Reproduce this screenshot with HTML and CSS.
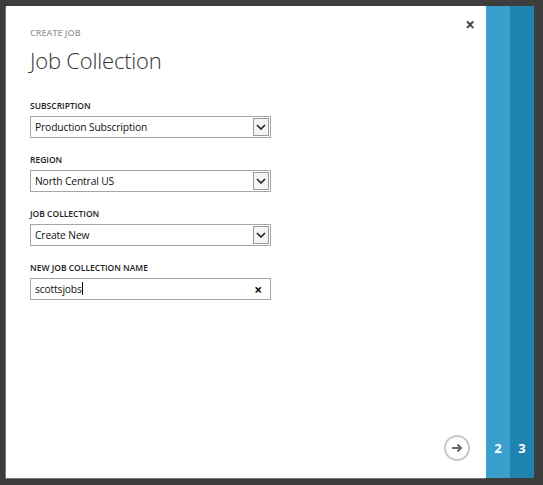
FILE: index.html
```
<html>

<head>
    <link rel="stylesheet" href="styles.css">
</head>

<body>
    <div class="modal">
        <div class="dialog">
            <div class="close">&#215;</div>
            <div class="kicker">CREATE JOB</div>
            <h1>Job Collection</h1>

            <div class="field">
                <label>SUBSCRIPTION</label>
                <div class="select">
                    <span>Production Subscription</span>
                    <span class="arrow"><svg width="10" height="6" viewBox="0 0 10 6"><path d="M1 1 L5 5 L9 1" fill="none" stroke="#222" stroke-width="1.6"/></svg></span>
                </div>
            </div>

            <div class="field">
                <label>REGION</label>
                <div class="select">
                    <span>North Central US</span>
                    <span class="arrow"><svg width="10" height="6" viewBox="0 0 10 6"><path d="M1 1 L5 5 L9 1" fill="none" stroke="#222" stroke-width="1.6"/></svg></span>
                </div>
            </div>

            <div class="field">
                <label>JOB COLLECTION</label>
                <div class="select">
                    <span>Create New</span>
                    <span class="arrow"><svg width="10" height="6" viewBox="0 0 10 6"><path d="M1 1 L5 5 L9 1" fill="none" stroke="#222" stroke-width="1.6"/></svg></span>
                </div>
            </div>

            <div class="field">
                <label>NEW JOB COLLECTION NAME</label>
                <div class="input">
                    <span>scottsjobs<span class="caret"></span></span>
                    <span class="clear">&#215;</span>
                </div>
            </div>

            <div class="next">
                <svg width="26" height="26" viewBox="0 0 26 26">
                    <circle cx="13" cy="13" r="12" fill="none" stroke="#c8c8c8" stroke-width="2"/>
                    <path d="M8 13 H17 M13.5 9.5 L17 13 L13.5 16.5" fill="none" stroke="#666" stroke-width="2"/>
                </svg>
            </div>
        </div>
        <div class="step step-2">2</div>
        <div class="step step-3">3</div>
    </div>
</body>

</html>
```

FILE: styles.css
```
body {
    margin: 0;
    background: #3d3d3d;
    font-family: "Open Sans", "Noto Sans", sans-serif;
    width: 543px;
    height: 485px;
    overflow: hidden;
}

.modal {
    position: absolute;
    top: 6px;
    left: 6px;
    display: flex;
    height: 472px;
}

.dialog {
    position: relative;
    width: 456px;
    height: 472px;
    background: #fff;
    padding: 0 0 0 24px;
    box-shadow: -1px 1px 0 #777;
}

.step {
    width: 24px;
    color: #fff;
    font-weight: bold;
    font-size: 13px;
    display: flex;
    align-items: flex-end;
    justify-content: center;
    padding-bottom: 21px;
    box-sizing: border-box;
}

.step-2 {
    background: #3a9fcc;
}

.step-3 {
    background: #1f83b0;
}

.close {
    position: absolute;
    top: 7px;
    right: 11px;
    font-size: 17px;
    font-weight: bold;
    color: #444;
}

.kicker {
    margin-top: 20px;
    font-size: 9px;
    font-weight: 600;
    color: #a0a0a0;
}

h1 {
    margin: 6px 0 25px 0;
    font-size: 22px;
    font-weight: 300;
    color: #333;
    letter-spacing: -0.2px;
}

.field {
    margin-bottom: 16px;
}

.field label {
    display: block;
    font-size: 8.5px;
    font-weight: 600;
    color: #222;
    margin-bottom: 5px;
}

.select,
.input {
    width: 241px;
    height: 22px;
    box-sizing: border-box;
    border: 1px solid #a6a6a6;
    display: flex;
    align-items: center;
    justify-content: space-between;
    padding-left: 4px;
    font-size: 10.3px;
    letter-spacing: -0.15px;
    color: #111;
}

.arrow {
    width: 16px;
    height: 18px;
    margin-right: 1px;
    border: 1px solid #9a9a9a;
    box-sizing: border-box;
    background: #f4f4f4;
    display: flex;
    align-items: center;
    justify-content: center;
}

.clear {
    margin-right: 8px;
    font-size: 14px;
    font-weight: bold;
}

.caret {
    display: inline-block;
    width: 1px;
    height: 13px;
    background: #000;
    vertical-align: -2px;
}

.next {
    position: absolute;
    right: 16px;
    bottom: 17px;
    width: 26px;
    height: 26px;
}
```
